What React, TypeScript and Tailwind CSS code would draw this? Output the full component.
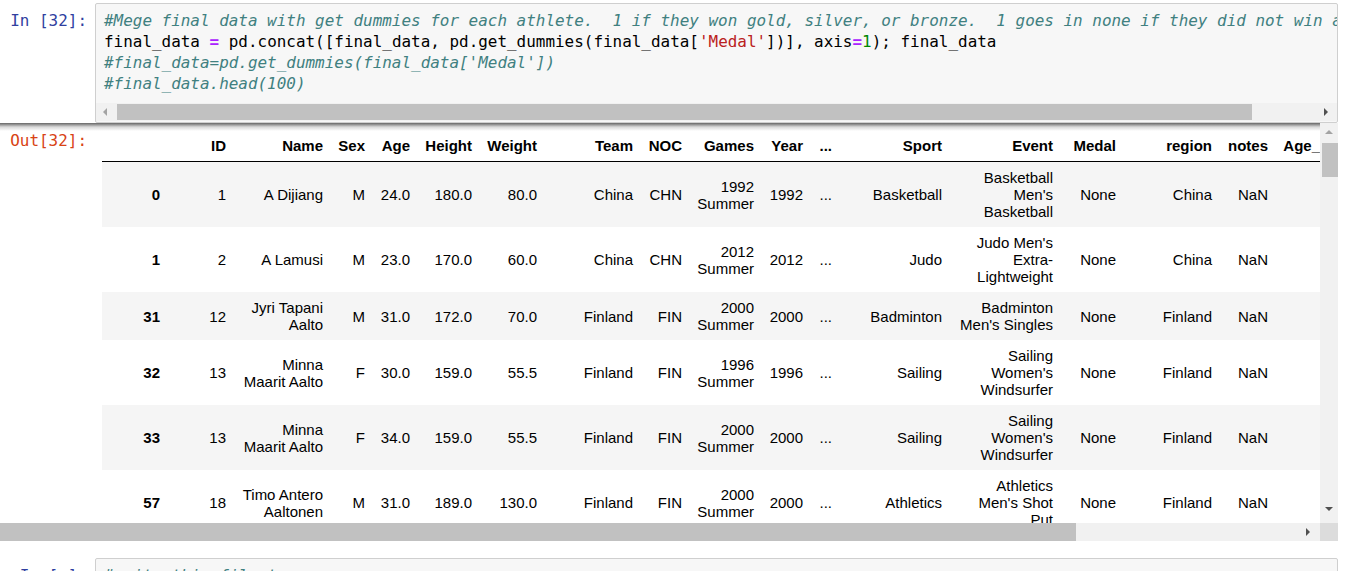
import React from "react";

type Cell = string | string[];

const mono = "font-['DejaVu_Sans_Mono','Liberation_Mono',monospace]";
const sans = "font-['Liberation_Sans',Arial,sans-serif]";

function Tri({ dir, fill }: { dir: "up" | "down" | "left" | "right"; fill: string }) {
  const horiz = dir === "left" || dir === "right";
  const w = horiz ? 4 : 8;
  const h = horiz ? 8 : 4;
  const pts =
    dir === "up"
      ? "0,4 4,0 8,4"
      : dir === "down"
      ? "0,0 8,0 4,4"
      : dir === "left"
      ? "4,0 4,8 0,4"
      : "0,0 4,4 0,8";
  return (
    <svg width={w} height={h} viewBox={`0 0 ${w} ${h}`}>
      <polygon points={pts} fill={fill} />
    </svg>
  );
}

const colWidths = [
  "w-[65px]",
  "w-[66px]",
  "w-[97px]",
  "w-[42px]",
  "w-[45px]",
  "w-[62px]",
  "w-[65px]",
  "w-[96px]",
  "w-[49px]",
  "w-[72px]",
  "w-[49px]",
  "w-[29px]",
  "w-[110px]",
  "w-[111px]",
  "w-[63px]",
  "w-[96px]",
  "w-[56px]",
  "w-[97px]",
];

const headers = [
  "",
  "ID",
  "Name",
  "Sex",
  "Age",
  "Height",
  "Weight",
  "Team",
  "NOC",
  "Games",
  "Year",
  "...",
  "Sport",
  "Event",
  "Medal",
  "region",
  "notes",
  "Age_Group",
];

const rows: Cell[][] = [
  ["0", "1", "A Dijiang", "M", "24.0", "180.0", "80.0", "China", "CHN", ["1992", "Summer"], "1992", "...", "Basketball", ["Basketball", "Men's", "Basketball"], "None", "China", "NaN", "20-29"],
  ["1", "2", "A Lamusi", "M", "23.0", "170.0", "60.0", "China", "CHN", ["2012", "Summer"], "2012", "...", "Judo", ["Judo Men's", "Extra-", "Lightweight"], "None", "China", "NaN", "20-29"],
  ["31", "12", ["Jyri Tapani", "Aalto"], "M", "31.0", "172.0", "70.0", "Finland", "FIN", ["2000", "Summer"], "2000", "...", "Badminton", ["Badminton", "Men's Singles"], "None", "Finland", "NaN", "30-39"],
  ["32", "13", ["Minna", "Maarit Aalto"], "F", "30.0", "159.0", "55.5", "Finland", "FIN", ["1996", "Summer"], "1996", "...", "Sailing", ["Sailing", "Women's", "Windsurfer"], "None", "Finland", "NaN", "30-39"],
  ["33", "13", ["Minna", "Maarit Aalto"], "F", "34.0", "159.0", "55.5", "Finland", "FIN", ["2000", "Summer"], "2000", "...", "Sailing", ["Sailing", "Women's", "Windsurfer"], "None", "Finland", "NaN", "30-39"],
  ["57", "18", ["Timo Antero", "Aaltonen"], "M", "31.0", "189.0", "130.0", "Finland", "FIN", ["2000", "Summer"], "2000", "...", "Athletics", ["Athletics", "Men's Shot", "Put"], "None", "Finland", "NaN", "30-39"],
];

function renderCell(c: Cell) {
  if (Array.isArray(c)) {
    return c.map((l, i) => (
      <React.Fragment key={i}>
        {i > 0 && <br />}
        {l}
      </React.Fragment>
    ));
  }
  return c;
}

const cmt = "text-[#408080] italic";

export default function App() {
  return (
    <div className="w-[1347px] h-[571px] overflow-hidden bg-white relative">
      {/* Input cell */}
      <div className="flex pt-[3px]">
        <div className={`${mono} w-[95px] shrink-0 pr-[8px] pt-[7px] text-right text-[15.95px] leading-[21px] text-[#303f9f]`}>
          In&nbsp;[32]:
        </div>
        <div className="w-[1243px] h-[120px] shrink-0 border border-[#cfcfcf] rounded-[2px] bg-[#f7f7f7] flex flex-col overflow-hidden">
          <div className={`${mono} flex-1 pt-[6px] pl-[8px] text-[15.95px] leading-[21px] whitespace-pre overflow-hidden text-black`}>
            <div className={cmt}>
              #Mege final data with get dummies for each athlete.  1 if they won gold, silver, or bronze.  1 goes in none if they did not win a medal
            </div>
            <div>
              final_data <span className="text-[#aa22ff] font-bold">=</span> pd.concat([final_data, pd.get_dummies(final_data[
              <span className="text-[#ba2121]">'Medal'</span>])], axis<span className="text-[#aa22ff] font-bold">=</span>
              <span className="text-[#008800]">1</span>); final_data
            </div>
            <div className={cmt}>#final_data=pd.get_dummies(final_data['Medal'])</div>
            <div className={cmt}>#final_data.head(100)</div>
          </div>
          <div className="h-[18px] mb-[1px] bg-[#f1f1f1] flex items-center shrink-0">
            <div className="w-[18px] h-full flex items-center justify-center">
              <Tri dir="left" fill="#a3a3a3" />
            </div>
            <div className="flex-1 h-full flex items-center pl-[3px]">
              <div className="w-[1135px] h-[16px] bg-[#c1c1c1]" />
            </div>
            <div className="w-[22px] h-full flex items-center justify-center">
              <Tri dir="right" fill="#505050" />
            </div>
          </div>
        </div>
      </div>

      {/* Output area */}
      <div className="flex h-[418px] w-[1338px]">
        <div className="w-[1320px] flex flex-col shrink-0">
          <div className="relative h-[400px] flex overflow-hidden">
            <div className={`${mono} w-[95px] shrink-0 pr-[8px] pt-[7px] text-right text-[15.95px] leading-[21px] text-[#d84315]`}>
              Out[32]:
            </div>
            <div className="ml-[7px] pt-[7px] shrink-0">
              <table className={`${sans} table-fixed w-[1270px] text-[15px] leading-[17px] text-black`}>
                <colgroup>
                  {colWidths.map((w, i) => (
                    <col key={i} className={w} />
                  ))}
                </colgroup>
                <thead>
                  <tr>
                    {headers.map((h, i) => (
                      <th
                        key={i}
                        className="text-right align-bottom font-bold pr-[7px] pl-0 py-[7px] border-b border-black whitespace-nowrap"
                      >
                        {h}
                      </th>
                    ))}
                  </tr>
                </thead>
                <tbody>
                  {rows.map((r, ri) => (
                    <tr key={ri} className={ri % 2 === 0 ? "bg-[#f5f5f5]" : "bg-white"}>
                      {r.map((c, ci) =>
                        ci === 0 ? (
                          <th key={ci} className="text-right align-middle font-bold pr-[7px] py-[7px] whitespace-nowrap">
                            {renderCell(c)}
                          </th>
                        ) : (
                          <td key={ci} className="text-right align-middle font-normal pr-[7px] py-[7px] whitespace-nowrap">
                            {renderCell(c)}
                          </td>
                        )
                      )}
                    </tr>
                  ))}
                </tbody>
              </table>
            </div>
            <div className="absolute left-0 top-0 w-full h-[8px] bg-[linear-gradient(to_bottom,rgba(0,0,0,0.6),rgba(0,0,0,0.15)_50%,rgba(0,0,0,0))]" />
          </div>
          <div className="h-[18px] bg-[#f1f1f1] flex items-center">
            <div className="w-[1076px] h-full bg-[#c1c1c1]" />
            <div className="flex-1" />
            <div className="w-[18px] h-full flex items-center justify-center mr-[3px]">
              <Tri dir="right" fill="#505050" />
            </div>
          </div>
        </div>
        <div className="w-[18px] flex flex-col shrink-0">
          <div className="flex-1 bg-[#f1f1f1] flex flex-col items-center">
            <div className="h-[18px] w-full flex items-center justify-center">
              <Tri dir="up" fill="#a3a3a3" />
            </div>
            <div className="mt-[2px] w-[16px] ml-[1px] h-[34px] bg-[#c1c1c1]" />
            <div className="flex-1" />
            <div className="h-[18px] w-full flex items-center justify-center mb-[5px]">
              <Tri dir="down" fill="#505050" />
            </div>
          </div>
          <div className="h-[18px] bg-[#dcdcdc]" />
        </div>
      </div>

      {/* Next cell */}
      <div className="flex mt-[17px]">
        <div className={`${mono} w-[95px] shrink-0 pr-[8px] pt-[7px] text-right text-[15.95px] leading-[21px] text-[#303f9f]`}>
          In&nbsp;[&nbsp;]:
        </div>
        <div className="w-[1243px] h-[60px] shrink-0 border border-[#cfcfcf] rounded-[2px] bg-[#f7f7f7]">
          <div className={`${mono} pt-[6px] pl-[8px] text-[15.95px] leading-[21px] whitespace-pre ${cmt}`}>
            #write this file to csv
          </div>
        </div>
      </div>
    </div>
  );
}
